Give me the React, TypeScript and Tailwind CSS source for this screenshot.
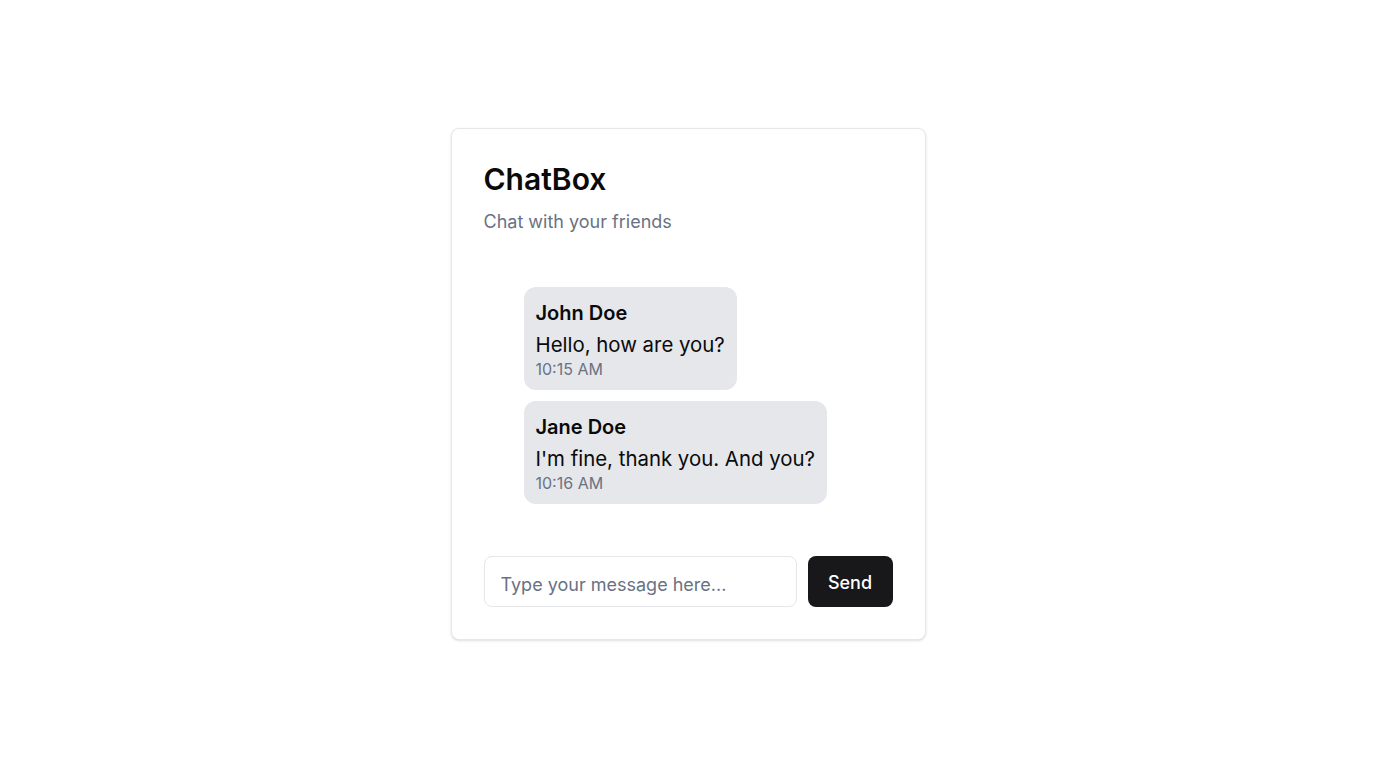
import React, { useState } from 'react';

const messages = [
  { id: 1, name: 'John Doe', text: 'Hello, how are you?', time: '10:15 AM' },
  { id: 2, name: 'Jane Doe', text: "I'm fine, thank you. And you?", time: '10:16 AM' },
];

const App: React.FC = () => {
  const [draft, setDraft] = useState('');

  return (
    <div className="flex min-h-screen items-center justify-center bg-white font-['Inter',sans-serif] text-[#0a0a0a]">
      <div className="w-[475px] rounded-lg border border-gray-200 bg-white p-8 shadow-sm">
        {/* Header */}
        <h1 className="text-3xl font-semibold leading-9">ChatBox</h1>
        <p className="mt-[11px] text-lg leading-7 text-gray-500">Chat with your friends</p>

        {/* Messages */}
        <div className="mt-[51px] flex flex-col items-start gap-[11px] pl-10">
          {messages.map((m) => (
            <div key={m.id} className="rounded-xl bg-gray-200 px-3 pb-[11px] pt-3">
              <p className="text-xl font-semibold leading-7">{m.name}</p>
              <p className="mt-1 text-[20.4px] leading-7">{m.text}</p>
              <p className="text-base leading-5 text-gray-500">{m.time}</p>
            </div>
          ))}
        </div>

        {/* Input */}
        <div className="mt-[52px] flex gap-[11px]">
          <input
            value={draft}
            onChange={(e) => setDraft(e.target.value)}
            placeholder="Type your message here..."
            className="h-[51px] min-w-0 flex-1 rounded-lg border border-gray-200 px-4 pt-[5px] text-lg placeholder:text-gray-500 focus:outline-none"
          />
          <button className="h-[51px] w-[85px] shrink-0 rounded-lg bg-[#18181b] pt-0.5 text-lg font-medium text-white">
            Send
          </button>
        </div>
      </div>
    </div>
  );
};

export default App;
